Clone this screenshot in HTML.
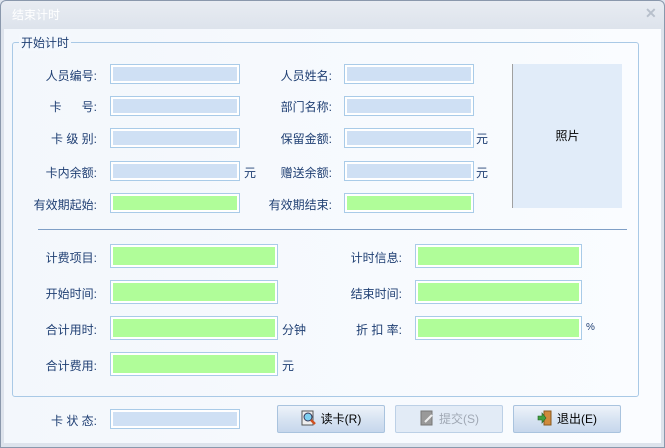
<!DOCTYPE html>
<html><head><meta charset="utf-8"><style>
*{margin:0;padding:0;box-sizing:border-box}
body{width:665px;height:448px;overflow:hidden;background:#dfe5ee;font-family:"Liberation Sans","Noto Sans CJK SC","WenQuanYi Zen Hei",sans-serif;font-size:12px;color:#1f3f73;position:relative}
.win{position:absolute;left:0;top:0;width:665px;height:448px;border:1px solid #8a98ac;border-radius:6px 6px 0 0;background:linear-gradient(#e8ecf2,#dde3ec 28px,#dde3ec)}
.title{position:absolute;left:12px;top:6px;color:#fff;font-size:12px}
.x{position:absolute;left:645px;top:5px;color:#b8c0cc;font-size:14px;font-weight:bold}
.body{position:absolute;left:4px;top:29px;width:657px;height:414px;background:linear-gradient(90deg,#f3f7fc,#fafcff)}
.grp{position:absolute;left:12px;top:42px;width:627px;height:355px;border:1px solid #a9c9e6;border-radius:3px}
.gt{position:absolute;left:19px;top:34px;background:#f4f8fd;padding:0 2px;color:#1f3f73}
.lb{position:absolute;text-align:right;white-space:nowrap}
.in{position:absolute;border:1px solid #a9cbe8;background:#cfe0f4;box-shadow:inset 0 0 0 2px #fff}
.g{background:#b0fd99}
.u{position:absolute}
.sep{position:absolute;left:38px;top:229px;width:589px;height:1px;background:#7f9fc6}
.ph{position:absolute;left:512px;top:64px;width:110px;height:144px;background:#e1ecf9;border-left:1px solid #a0a0a0;color:#000;text-align:center;line-height:144px}
.btn{position:absolute;top:405px;height:28px;border:1px solid #a9c3de;border-radius:2px;background:linear-gradient(#eef3fa,#d8e4f2 50%,#c6d7ec);text-align:center;line-height:26px;color:#000}
.btn.d{background:#e2ebf6;border-color:#bcd0e6;color:#a0a8b4}
.ic{display:inline-block;width:16px;height:16px;vertical-align:-3px;margin-right:4px}
</style></head><body>
<div class="win"></div>
<div class="title">结束计时</div>
<div class="x">✕</div>
<div class="body"></div>
<div class="grp"></div>
<div class="gt">开始计时</div>

<div class="lb" style="left:27px;width:70px;top:67px">人员编号:</div>
<div class="in" style="left:110px;top:64px;width:130px;height:20px"></div>
<div class="lb" style="left:27px;width:70px;top:98px">卡&nbsp;&nbsp;&nbsp;&nbsp;&nbsp;&nbsp;号:</div>
<div class="in" style="left:110px;top:96px;width:130px;height:20px"></div>
<div class="lb" style="left:27px;width:70px;top:130px">卡 级 别:</div>
<div class="in" style="left:110px;top:128px;width:130px;height:20px"></div>
<div class="lb" style="left:27px;width:70px;top:164px">卡内余额:</div>
<div class="in" style="left:110px;top:161px;width:130px;height:20px"></div>
<div class="u" style="left:244px;top:164px">元</div>
<div class="lb" style="left:17px;width:80px;top:196px">有效期起始:</div>
<div class="in g" style="left:110px;top:193px;width:130px;height:20px"></div>

<div class="lb" style="left:257px;width:75px;top:67px">人员姓名:</div>
<div class="in" style="left:344px;top:64px;width:130px;height:20px"></div>
<div class="lb" style="left:257px;width:75px;top:98px">部门名称:</div>
<div class="in" style="left:344px;top:96px;width:130px;height:20px"></div>
<div class="lb" style="left:257px;width:75px;top:130px">保留金额:</div>
<div class="in" style="left:344px;top:128px;width:130px;height:20px"></div>
<div class="u" style="left:476px;top:130px">元</div>
<div class="lb" style="left:257px;width:75px;top:164px">赠送余额:</div>
<div class="in" style="left:344px;top:161px;width:130px;height:20px"></div>
<div class="u" style="left:476px;top:164px">元</div>
<div class="lb" style="left:247px;width:85px;top:196px">有效期结束:</div>
<div class="in g" style="left:344px;top:193px;width:130px;height:20px"></div>

<div class="ph">照片</div>
<div class="sep"></div>

<div class="lb" style="left:27px;width:70px;top:249px">计费项目:</div>
<div class="in g" style="left:110px;top:244px;width:168px;height:24px"></div>
<div class="lb" style="left:27px;width:70px;top:285px">开始时间:</div>
<div class="in g" style="left:110px;top:280px;width:168px;height:24px"></div>
<div class="lb" style="left:27px;width:70px;top:321px">合计用时:</div>
<div class="in g" style="left:110px;top:316px;width:168px;height:24px"></div>
<div class="u" style="left:282px;top:321px">分钟</div>
<div class="lb" style="left:27px;width:70px;top:357px">合计费用:</div>
<div class="in g" style="left:110px;top:352px;width:168px;height:24px"></div>
<div class="u" style="left:282px;top:357px">元</div>

<div class="lb" style="left:327px;width:75px;top:249px">计时信息:</div>
<div class="in g" style="left:415px;top:244px;width:167px;height:24px"></div>
<div class="lb" style="left:327px;width:75px;top:285px">结束时间:</div>
<div class="in g" style="left:415px;top:280px;width:167px;height:24px"></div>
<div class="lb" style="left:327px;width:75px;top:321px">折 扣 率:</div>
<div class="in g" style="left:415px;top:316px;width:167px;height:24px"></div>
<div class="u" style="left:586px;top:322px;font-size:10px">%</div>

<div class="lb" style="left:27px;width:70px;top:412px">卡 状 态:</div>
<div class="in" style="left:110px;top:409px;width:130px;height:20px"></div>

<div class="btn" style="left:277px;width:108px"><svg class="ic" viewBox="0 0 16 16"><rect x="1" y="1" width="11" height="14" fill="#eee" stroke="#555"/><circle cx="7" cy="7" r="4" fill="#7fd0f0" stroke="#335"/><path d="M10 10l4 4" stroke="#d05020" stroke-width="2.5"/></svg>读卡(R)</div>
<div class="btn d" style="left:395px;width:108px"><svg class="ic" viewBox="0 0 16 16"><rect x="2" y="1" width="11" height="14" fill="#999" stroke="#777"/><path d="M6 12l7-7" stroke="#eee" stroke-width="2"/></svg>提交(S)</div>
<div class="btn" style="left:513px;width:108px"><svg class="ic" viewBox="0 0 16 16"><rect x="7" y="1" width="7" height="14" fill="#d08a3c" stroke="#8a5a20"/><path d="M1 6h4V3l4 5-4 5v-3H1z" fill="#40a040" stroke="#206020" stroke-width=".6"/></svg>退出(E)</div>
</body></html>
